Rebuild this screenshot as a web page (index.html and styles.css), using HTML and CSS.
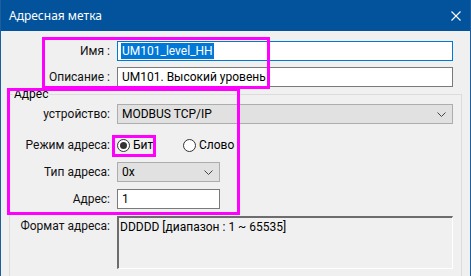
FILE: index.html
```html
<!DOCTYPE html>
<html lang="ru">
<head>
  <meta charset="UTF-8" />
  <title>Адресная метка</title>
  <link rel="stylesheet" href="styles.css">
</head>
<body>

  <div class="window">
    <div class="titlebar">
      <span class="title">Адресная метка</span>
      <svg class="close" width="10" height="10" viewBox="0 0 10 10">
        <path d="M0.5 0.5 L9.5 9.5 M9.5 0.5 L0.5 9.5" stroke="#fff" stroke-width="1.1" fill="none"/>
      </svg>
    </div>

    <div class="content">
      <div class="row">
        <label class="label">Имя :</label>
        <div class="field input focused"><span class="selected">UM101_level_HH</span></div>
      </div>
      <div class="row gap6">
        <label class="label">Описание :</label>
        <div class="field input">UM101. Высокий уровень</div>
      </div>

      <fieldset class="group">
        <legend>Адрес</legend>

        <div class="row first">
          <label class="label">устройство:</label>
          <div class="field select">
            <span>MODBUS TCP/IP</span>
            <svg class="chev" width="9" height="5" viewBox="0 0 9 5"><path d="M0.5 0.5 L4.5 4.5 L8.5 0.5" stroke="#444" fill="none"/></svg>
          </div>
        </div>

        <div class="row radios">
          <label class="label">Режим адреса:</label>
          <div class="radio-group">
            <span class="radio"><span class="dot on"></span>Бит</span>
            <span class="radio"><span class="dot"></span>Слово</span>
          </div>
        </div>

        <div class="row">
          <label class="label">Тип адреса:</label>
          <div class="field select short">
            <span>0x</span>
            <svg class="chev" width="9" height="5" viewBox="0 0 9 5"><path d="M0.5 0.5 L4.5 4.5 L8.5 0.5" stroke="#444" fill="none"/></svg>
          </div>
        </div>

        <div class="row">
          <label class="label">Адрес:</label>
          <div class="field input short">1</div>
        </div>

        <div class="row format">
          <label class="label">Формат адреса:</label>
          <div class="field memo">DDDDD [диапазон : 1 ~ 65535]</div>
        </div>
      </fieldset>
    </div>

    <!-- пометки поверх окна -->
    <div class="mark mark-name"></div>
    <div class="mark mark-addr"></div>
    <div class="mark mark-bit"></div>
  </div>

</body>
</html>
```

FILE: styles.css
```css
body {
  margin: 0;
  padding: 0;
  font-family: Roboto, 'Liberation Sans', sans-serif;
  font-size: 12px;
  color: #000;
  background: #f0f0f0;
}

.window {
  position: relative;
  width: 471px;
  height: 276px;
  box-sizing: border-box;
  border-left: 1px solid #1c5e9e;
  border-right: 1px solid #1c5e9e;
  background: #f0f0f0;
  overflow: hidden;
}

.titlebar {
  height: 31px;
  background: #02539b;
  color: #fff;
  display: flex;
  align-items: center;
  justify-content: space-between;
  padding: 0 9px 0 8px;
  font-family: 'Noto Sans', sans-serif;
  font-size: 12px;
}

.close {
  margin-top: 1px;
}

.content {
  padding-top: 10px;
}

.row {
  display: flex;
  align-items: center;
  height: 20px;
}

.gap6 {
  margin-top: 6px;
}

.label {
  width: 116px;
  padding-right: 7px;
  box-sizing: border-box;
  text-align: right;
  flex-shrink: 0;
  color: #111;
}

.field {
  width: 336px;
  height: 20px;
  box-sizing: border-box;
  display: flex;
  align-items: center;
  padding-left: 4px;
  white-space: nowrap;
}

.input {
  background: #fff;
  border: 1px solid #7a7a7a;
}

.input.focused {
  border-color: #0078d7;
  padding-left: 3px;
}

.selected {
  background: #0078d7;
  color: #fff;
  padding: 1px 1px;
}

.short {
  width: 103px;
}

.group {
  margin: 0 0 0 8px;
  padding: 0 7px 0 0;
  border: 1px solid #dcdcdc;
  border-bottom: none;
  width: 453px;
  box-sizing: border-box;
  height: 200px;
}

.group legend {
  padding: 0 1px;
  margin-left: 3px;
  line-height: 14px;
}

.group .label {
  width: 107px;
}

.group .row {
  margin-top: 7px;
}

.group .row.first {
  margin-top: 3px;
}

.group .row.radios {
  margin-top: 11px;
}

.select {
  background: #e1e1e1;
  border: 1px solid #adadad;
  justify-content: space-between;
  padding-right: 6px;
}

.radio-group {
  display: flex;
  height: 20px;
  align-items: center;
}

.radio {
  display: flex;
  align-items: center;
  width: 66px;
}

.dot {
  width: 13px;
  height: 13px;
  box-sizing: border-box;
  border: 1px solid #333;
  border-radius: 50%;
  background: #fff;
  margin-right: 3px;
  position: relative;
}

.dot.on::after {
  content: "";
  position: absolute;
  left: 2px;
  top: 2px;
  width: 7px;
  height: 7px;
  border-radius: 50%;
  background: #333;
}

.row.format {
  align-items: flex-start;
  height: 53px;
}

.format .label {
  padding-top: 3px;
}

.memo {
  height: 53px;
  align-items: flex-start;
  padding: 2px 0 0 1px;
  border-top: 2px solid #6d6d6d;
  border-left: 2px solid #6d6d6d;
  border-right: 1px solid #fff;
  border-bottom: 1px solid #fff;
  background: #f0f0f0;
}

.mark {
  position: absolute;
  border: 3px solid #ff00ff;
  box-sizing: border-box;
}

.mark-name {
  left: 41px;
  top: 37px;
  width: 228px;
  height: 52px;
}

.mark-addr {
  left: 6px;
  top: 88px;
  width: 233px;
  height: 127px;
}

.mark-bit {
  left: 111px;
  top: 135px;
  width: 44px;
  height: 22px;
}
```
